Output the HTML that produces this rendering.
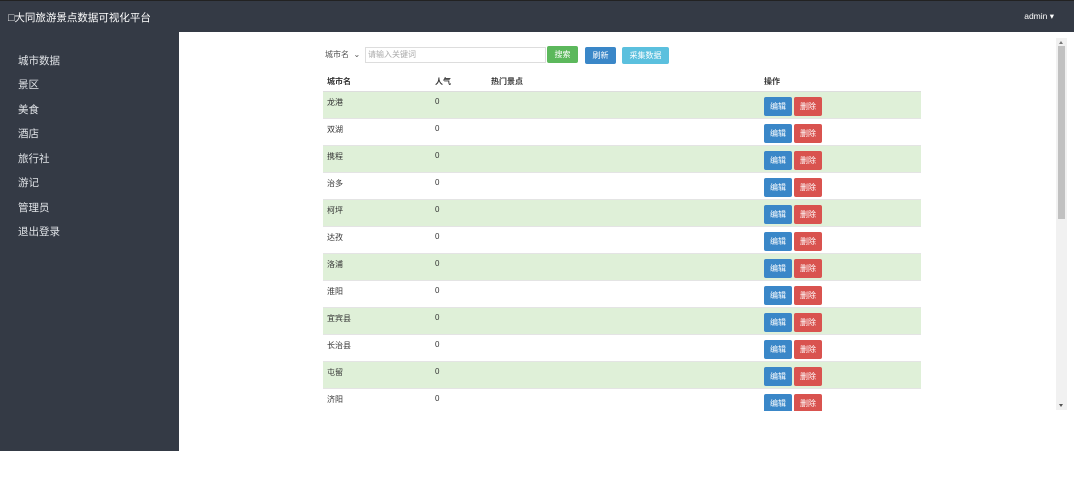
<!DOCTYPE html>
<html><head><meta charset="utf-8"><style>
*{margin:0;padding:0;box-sizing:border-box}
body{width:1074px;height:500px;background:#fff;font-family:"Liberation Sans","Noto Sans CJK SC",sans-serif;position:relative;overflow:hidden}
.hd{position:absolute;left:0;top:0;width:1074px;height:32px;background:#343a45;border-top:1px solid #222}
.hd .t{position:absolute;left:8px;top:9px;color:#fff;font-size:10.5px}
.hd .a{position:absolute;right:20px;top:10px;color:#fff;font-size:8.5px}
.sb{position:absolute;left:0;top:32px;width:179px;height:419px;background:#343a45}
.sb div{position:absolute;left:18px;color:#dfe2e6;font-size:10.5px}
.frame{position:absolute;left:179px;top:32px;width:895px;height:379px;overflow:hidden}
.srch{position:absolute;left:144px;top:15px;height:16px;font-size:8px;color:#555}
.sel{position:absolute;left:0;top:0;width:42px;height:16px;line-height:16px;padding-left:2px}
.inp{position:absolute;left:42px;top:0;width:181px;height:16px;border:1px solid #ddd;line-height:14px;padding-left:2px;color:#aaa}
.btn{position:absolute;height:17px;line-height:17px;color:#fff;text-align:center;border-radius:2px;font-size:8px}
table{position:absolute;left:144px;top:40px;width:598px;border-collapse:collapse;font-size:8px;color:#333}
th{text-align:left;height:19px;padding-left:4px;font-weight:bold;border-bottom:1px solid #ddd}
td{height:27px;padding-left:4px;vertical-align:top;padding-top:5px;border-top:1px solid #e4e4e4}
tr.g td{background:#dff0d8}
.e,.d{display:inline-block;width:28px;height:19px;line-height:19px;text-align:center;color:#fff;border-radius:2px}
.e{background:#3a87c8}.d{background:#d9534f;margin-left:2px}
.scr{position:absolute;left:1056px;top:38px;width:11px;height:372px;background:#f1f1f1}
.th{position:absolute;left:2px;top:8px;width:7px;height:173px;background:#c1c1c1}
.ar{position:absolute;left:3px;width:0;height:0;border-left:2.5px solid transparent;border-right:2.5px solid transparent}
</style></head><body>
<div class="hd"><div class="t">□大同旅游景点数据可视化平台</div><div class="a">admin ▾</div></div>
<div class="sb">
<div style="top:21px">城市数据</div><div style="top:45px">景区</div><div style="top:70px">美食</div><div style="top:94px">酒店</div><div style="top:119px">旅行社</div><div style="top:143px">游记</div><div style="top:168px">管理员</div><div style="top:192px">退出登录</div>
</div>
<div class="frame">
<div class="srch"><div class="sel">城市名 &nbsp;⌄</div><div class="inp">请输入关键词</div>
<div class="btn" style="left:224px;top:-1px;width:31px;background:#5cb85c">搜索</div>
<div class="btn" style="left:262px;top:0;width:31px;background:#3a87c8">刷新</div>
<div class="btn" style="left:299px;top:0;width:47px;background:#5bc0de">采集数据</div></div>
<table>
<tr><th style="width:108px">城市名</th><th style="width:56px">人气</th><th style="width:273px">热门景点</th><th>操作</th></tr>
<tr class="g"><td>龙港</td><td>0</td><td></td><td><span class="e">编辑</span><span class="d">删除</span></td></tr>
<tr><td>双湖</td><td>0</td><td></td><td><span class="e">编辑</span><span class="d">删除</span></td></tr>
<tr class="g"><td>携程</td><td>0</td><td></td><td><span class="e">编辑</span><span class="d">删除</span></td></tr>
<tr><td>治多</td><td>0</td><td></td><td><span class="e">编辑</span><span class="d">删除</span></td></tr>
<tr class="g"><td>柯坪</td><td>0</td><td></td><td><span class="e">编辑</span><span class="d">删除</span></td></tr>
<tr><td>达孜</td><td>0</td><td></td><td><span class="e">编辑</span><span class="d">删除</span></td></tr>
<tr class="g"><td>洛浦</td><td>0</td><td></td><td><span class="e">编辑</span><span class="d">删除</span></td></tr>
<tr><td>淮阳</td><td>0</td><td></td><td><span class="e">编辑</span><span class="d">删除</span></td></tr>
<tr class="g"><td>宜宾县</td><td>0</td><td></td><td><span class="e">编辑</span><span class="d">删除</span></td></tr>
<tr><td>长治县</td><td>0</td><td></td><td><span class="e">编辑</span><span class="d">删除</span></td></tr>
<tr class="g"><td>屯留</td><td>0</td><td></td><td><span class="e">编辑</span><span class="d">删除</span></td></tr>
<tr><td>济阳</td><td>0</td><td></td><td><span class="e">编辑</span><span class="d">删除</span></td></tr>
</table>
</div>
<div class="scr"><div class="ar" style="top:3px;border-bottom:3px solid #777"></div><div class="th"></div><div class="ar" style="top:366px;border-top:3px solid #555"></div></div>
</body></html>
